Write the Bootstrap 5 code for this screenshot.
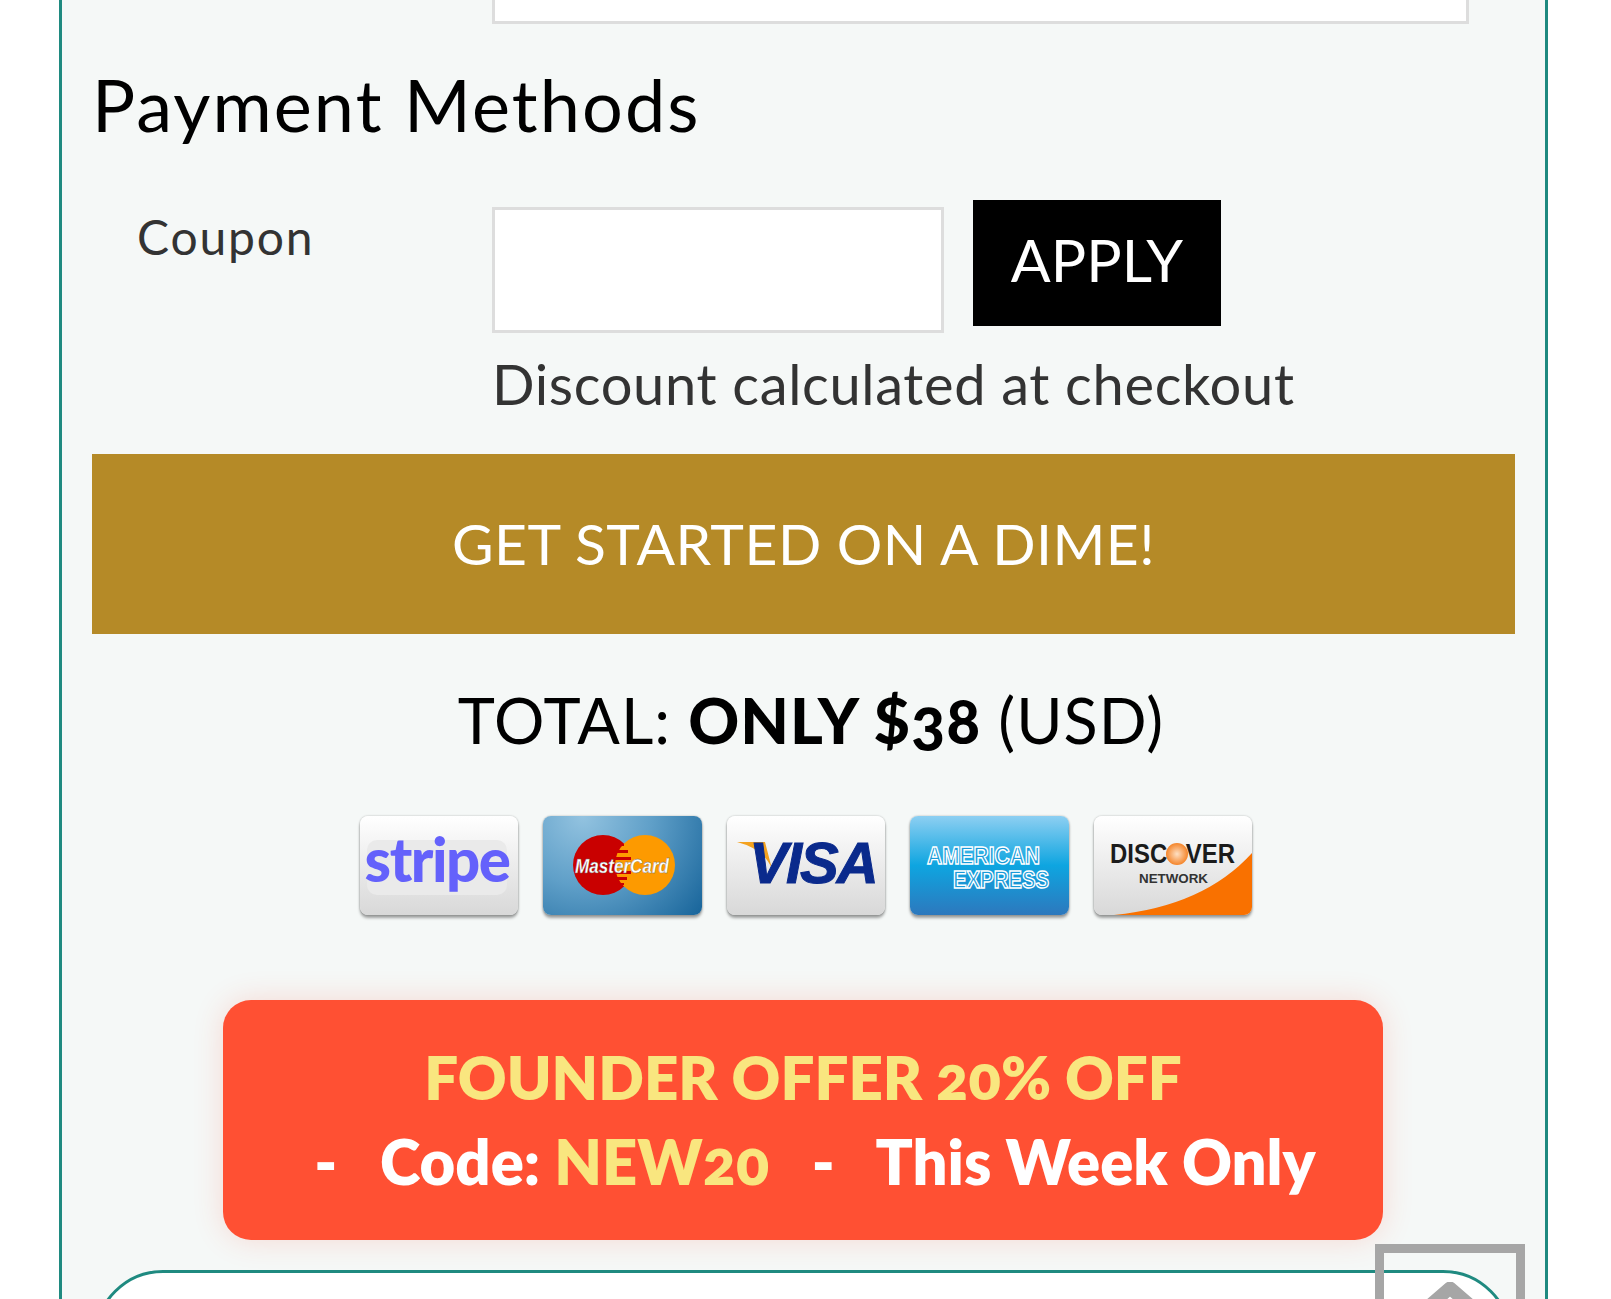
<!DOCTYPE html>
<html lang="en">
<head>
  <meta charset="UTF-8">
  <meta name="viewport" content="width=device-width, initial-scale=1">
  <title>Payment Methods</title>
  <link href="https://cdn.jsdelivr.net/npm/bootstrap@5.3.0/dist/css/bootstrap.min.css" rel="stylesheet">
  <style>
    html, body { height: 1299px; overflow: hidden; }
    body { background: #fff; font-family: Lato, "Liberation Sans", sans-serif; color: #333; font-weight: 400; }
    .checkout-panel { margin-left: 59px; width: 1489px; height: 1299px; border: solid #1f8a80; border-width: 0 3px; background: #f5f8f7; padding: 0 30px; overflow: hidden; }
    .field-stub { height: 24px; margin-left: 400px; width: 977px; background: #fff; border: 3px solid #ddd; border-top: 0; }
    .pay-title { font-size: 72px; line-height: 84px; margin: 38px 0 0 0; color: #000; font-weight: 400; letter-spacing: 2.1px; }
    .coupon-row { margin-top: 54px; height: 133px; }
    .coupon-label { width: 400px; padding: 7px 0 0 45px; font-size: 48px; line-height: 60px; margin: 0; letter-spacing: 1.8px; }
    .coupon-input.form-control { width: 452px; height: 126px; margin-top: 7px; border: 3px solid #ddd; border-radius: 0; background: #fff; }
    .apply-btn.btn { width: 248px; height: 126px; margin-left: 29px; background: #000; color: #fff; border: 0; border-radius: 0; font-size: 59px; font-weight: 400; padding: 0 0 6px; }
    .coupon-note { margin: 18px 0 0 400px; font-size: 56px; line-height: 66px; letter-spacing: .67px; }
    .start-bar { margin-top: 37px; height: 180px; width: 1423px; background: #b58a27; color: #fff; font-size: 57px; font-weight: 400; letter-spacing: .47px; }
    .total-line { margin: 48px 0 0; padding-left: 15px; font-size: 63px; line-height: 76px; color: #000; letter-spacing: 1px; }
    .total-line b { font-weight: 900; }
    .old-num { font-variant-numeric: oldstyle-nums; }
    .pay-cards { margin-top: 58px; gap: 25px; padding-left: 5px; }
    .pay-tile { width: 158.4px; height: 99px; border-radius: 8px; box-shadow: 0 3px 3px rgba(0,0,0,.35), 0 0 2px rgba(0,0,0,.3); overflow: hidden; }
    .pay-tile svg { display: block; }
    .tile-light { background: linear-gradient(#fff, #d8d8d8); }
    .tile-mc { background: radial-gradient(circle at 25% 0, #93c3e0, #5f9fc8 45%, #17649a 100%); }
    .tile-amex { background: linear-gradient(#8dcff2, #0ea5e0 50%, #2d78bd); }
    .offer-box { margin: 85px 0 0 131px; width: 1160px; height: 240px; background: #ff5033; border-radius: 28px; box-shadow: 0 0 30px rgba(255,80,51,.18); color: #fff; font-size: 61.5px; line-height: 84px; font-weight: 800; padding-top: 35px; }
    .offer-gold { color: #f9e67f; }
    .offer-head { font-size: 60px; }
    .offer-code { padding-left: 24px; }
    .plan-box { margin: 30px 0 0 2px; width: 1418px; height: 200px; background: #fff; border: 3px solid #1f8a80; border-radius: 69px; }
    .back-top { position: fixed; left: 1375px; top: 1244px; width: 150px; height: 150px; border: 9px solid #a6a6a6; }
    .back-top svg { display: block; margin: 29px auto 0; }
  </style>
</head>
<body>
  <div class="checkout-panel">
    <div class="field-stub"></div>
    <h2 class="pay-title">Payment Methods</h2>
    <div class="coupon-row d-flex align-items-start">
      <label class="coupon-label" for="coupon">Coupon</label>
      <input class="coupon-input form-control" id="coupon" type="text">
      <button class="apply-btn btn" type="button">APPLY</button>
    </div>
    <p class="coupon-note">Discount calculated at checkout</p>
    <div class="start-bar d-flex align-items-center justify-content-center">GET STARTED ON A DIME!</div>
    <p class="total-line text-center">TOTAL: <b>ONLY $<span class="old-num">38</span></b> (USD)</p>
    <div class="pay-cards d-flex justify-content-center">
      <div class="pay-tile tile-light">
        <svg width="158" height="99" viewBox="0 0 158 99">
          <rect x="7" y="24" width="140" height="55" rx="10" fill="#eaeaea"/>
          <text x="77" y="66" text-anchor="middle" font-family="Lato, sans-serif" font-weight="900" font-size="60" letter-spacing="-1.5" fill="#6461fb">stripe</text>
        </svg>
      </div>
      <div class="pay-tile tile-mc">
        <svg width="158" height="99" viewBox="0 0 158 99">
          <circle cx="60" cy="49" r="30" fill="#c90000"/>
          <circle cx="102" cy="49" r="30" fill="#fd9a00"/>
          <path d="M81 28h-4v2h4zM85 34h-12v3h12zM88 41h-18v3h18zM88 55h-18v3h18zM84 61h-10v3h10zM81 67h-5v2h5z" fill="#c90000"/>
          <text x="79" y="57" text-anchor="middle" font-family="Liberation Sans, sans-serif" font-style="italic" font-weight="700" font-size="20" textLength="94" lengthAdjust="spacingAndGlyphs" fill="#fff" stroke="#666" stroke-width=".3">MasterCard</text>
        </svg>
      </div>
      <div class="pay-tile tile-light">
        <svg width="158" height="99" viewBox="0 0 158 99">
          <path d="M10 26h28l7 27q-8-20-35-27z" fill="#f4a21f"/>
          <text x="86" y="67" text-anchor="middle" font-family="Liberation Sans, sans-serif" font-style="italic" font-weight="700" font-size="58" letter-spacing="-2" fill="#0a2a8c" stroke="#0a2a8c" stroke-width="1">VISA</text>
        </svg>
      </div>
      <div class="pay-tile tile-amex">
        <svg width="158" height="99" viewBox="0 0 158 99">
          <text x="17" y="48" font-family="Liberation Sans, sans-serif" font-weight="700" font-size="23" textLength="113" lengthAdjust="spacingAndGlyphs" fill="#1a9ad9" stroke="#fff" stroke-width="1.4">AMERICAN</text>
          <text x="43" y="72" font-family="Liberation Sans, sans-serif" font-weight="700" font-size="23" textLength="96" lengthAdjust="spacingAndGlyphs" fill="#1a9ad9" stroke="#fff" stroke-width="1.4">EXPRESS</text>
        </svg>
      </div>
      <div class="pay-tile tile-light">
        <svg width="158" height="99" viewBox="0 0 158 99">
          <defs>
            <radialGradient id="discoverDot" cx="50%" cy="50%" r="50%">
              <stop offset="0" stop-color="#fde0c4"/>
              <stop offset="1" stop-color="#f5852a"/>
            </radialGradient>
          </defs>
          <path d="M20 99Q110 90 158 37V99z" fill="#f97100"/>
          <circle cx="83" cy="38" r="11" fill="url(#discoverDot)"/>
          <text x="16" y="47" font-family="Liberation Sans, sans-serif" font-weight="700" font-size="27" textLength="125" lengthAdjust="spacingAndGlyphs" fill="#1b1b1b">DISC<tspan fill="none">O</tspan>VER</text>
          <text x="45" y="67" font-family="Liberation Sans, sans-serif" font-weight="700" font-size="12" textLength="69" lengthAdjust="spacingAndGlyphs" fill="#333">NETWORK</text>
        </svg>
      </div>
    </div>
    <div class="offer-box text-center">
      <div class="offer-gold offer-head">FOUNDER OFFER <span class="old-num">20</span>% OFF</div>
      <div class="offer-code">-&nbsp;&nbsp; Code: <span class="offer-gold">NEW<span class="old-num">20</span></span> &nbsp;&nbsp;-&nbsp;&nbsp; This Week Only</div>
    </div>
    <div class="plan-box"></div>
  </div>
  <div class="back-top">
    <svg width="60" height="30" viewBox="0 0 60 30"><path d="M8 25L30 6l22 19" fill="none" stroke="#a6a6a6" stroke-width="13" stroke-linejoin="round"/></svg>
  </div>
  <script src="https://cdn.jsdelivr.net/npm/bootstrap@5.3.0/dist/js/bootstrap.bundle.min.js"></script>
</body>
</html>
